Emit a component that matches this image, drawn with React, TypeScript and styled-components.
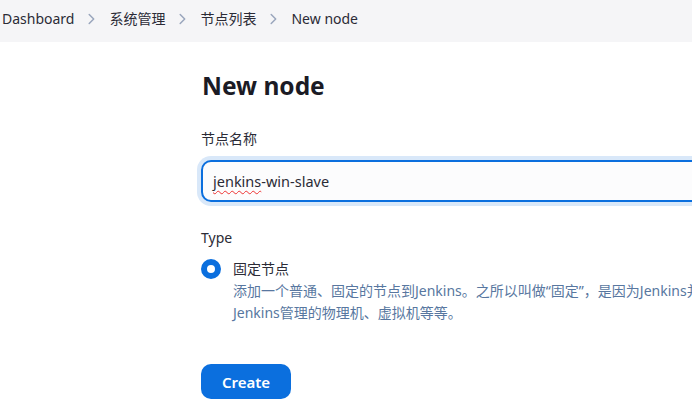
import React from "react";
import styled, { createGlobalStyle } from "styled-components";

const Global = createGlobalStyle`
  html, body { margin: 0; padding: 0; background: #fff; overflow: hidden; }
  body { font-family: "Noto Sans", "Noto Sans CJK SC", sans-serif; color: #1f1f2b; }
  * { box-sizing: border-box; }
`;

const Page = styled.div`
  width: 692px;
  height: 411px;
  overflow: hidden;
`;

const Crumbs = styled.nav`
  height: 42px;
  background: #f5f5f7;
  display: flex;
  align-items: center;
  padding: 0 0 4px 2px;
  gap: 14px;
  font-size: 14px;
  color: #2b2b36;
  white-space: nowrap;
`;

const Crumb = styled.span`
  line-height: 20px;
`;

const Chevron = () => (
  <svg width="7" height="12" viewBox="0 0 7 12" fill="none">
    <path d="M1.2 1.5 L5.7 6 L1.2 10.5" stroke="#9aa6bd" strokeWidth="1.5" strokeLinecap="round" strokeLinejoin="round" />
  </svg>
);

const Main = styled.main`
  padding: 26px 0 0 201px;
  width: 1100px;
  display: flex;
  flex-direction: column;
`;

const Title = styled.h1`
  margin: 0 0 0 1px;
  font-size: 24.5px;
  font-weight: 700;
  line-height: 36px;
  color: #1b1b25;
`;

const Label = styled.div<{ $top: number }>`
  margin-top: ${(p) => p.$top}px;
  font-size: 14px;
  line-height: 20px;
  color: #2b2b36;
`;

const Spell = styled.span`
  text-decoration: underline wavy #e33;
  text-decoration-thickness: 1px;
  text-underline-offset: 3px;
`;

const TextBox = styled.div`
  margin-top: 11px;
  width: 720px;
  height: 42px;
  border: 2px solid #0b6fde;
  border-radius: 10px;
  background: #fcfcfd;
  box-shadow: 0 0 0 4px #d9e8f9;
  padding: 0 10px;
  display: flex;
  align-items: center;
  font-size: 14.5px;
  color: #2b2b36;
`;

const Option = styled.label`
  margin-top: 10px;
  display: flex;
  gap: 12px;
  align-items: flex-start;
`;

const Radio = styled.span`
  flex: none;
  width: 20px;
  height: 20px;
  margin-top: 1px;
  border-radius: 50%;
  border: 6.5px solid #0b6fde;
  background: #fff;
`;

const OptionText = styled.div`
  display: flex;
  flex-direction: column;
`;

const OptionTitle = styled.div`
  font-size: 14px;
  line-height: 22px;
  color: #2b2b36;
`;

const Desc = styled.div`
  font-size: 14px;
  line-height: 22px;
  color: #5877a0;
  white-space: nowrap;
`;

const Button = styled.button`
  margin-top: 40px;
  align-self: flex-start;
  width: 90px;
  height: 35px;
  border: none;
  border-radius: 10px;
  background: #0b6fde;
  color: #fff;
  font: inherit;
  font-size: 15px;
  font-weight: 600;
`;

export default function App() {
  return (
    <Page>
      <Global />
      <Crumbs>
        <Crumb>Dashboard</Crumb>
        <Chevron />
        <Crumb>系统管理</Crumb>
        <Chevron />
        <Crumb>节点列表</Crumb>
        <Chevron />
        <Crumb>New node</Crumb>
      </Crumbs>
      <Main>
        <Title>New node</Title>
        <Label $top={25}>节点名称</Label>
        <TextBox>
          <span>
            <Spell>jenkins</Spell>-win-slave
          </span>
        </TextBox>
        <Label $top={26}>Type</Label>
        <Option>
          <Radio />
          <OptionText>
            <OptionTitle>固定节点</OptionTitle>
            <Desc>
              添加一个普通、固定的节点到Jenkins。之所以叫做“固定”，是因为Jenkins并不提供更高级别的集成，比如动态供给。
            </Desc>
            <Desc>Jenkins管理的物理机、虚拟机等等。</Desc>
          </OptionText>
        </Option>
        <Button>Create</Button>
      </Main>
    </Page>
  );
}
